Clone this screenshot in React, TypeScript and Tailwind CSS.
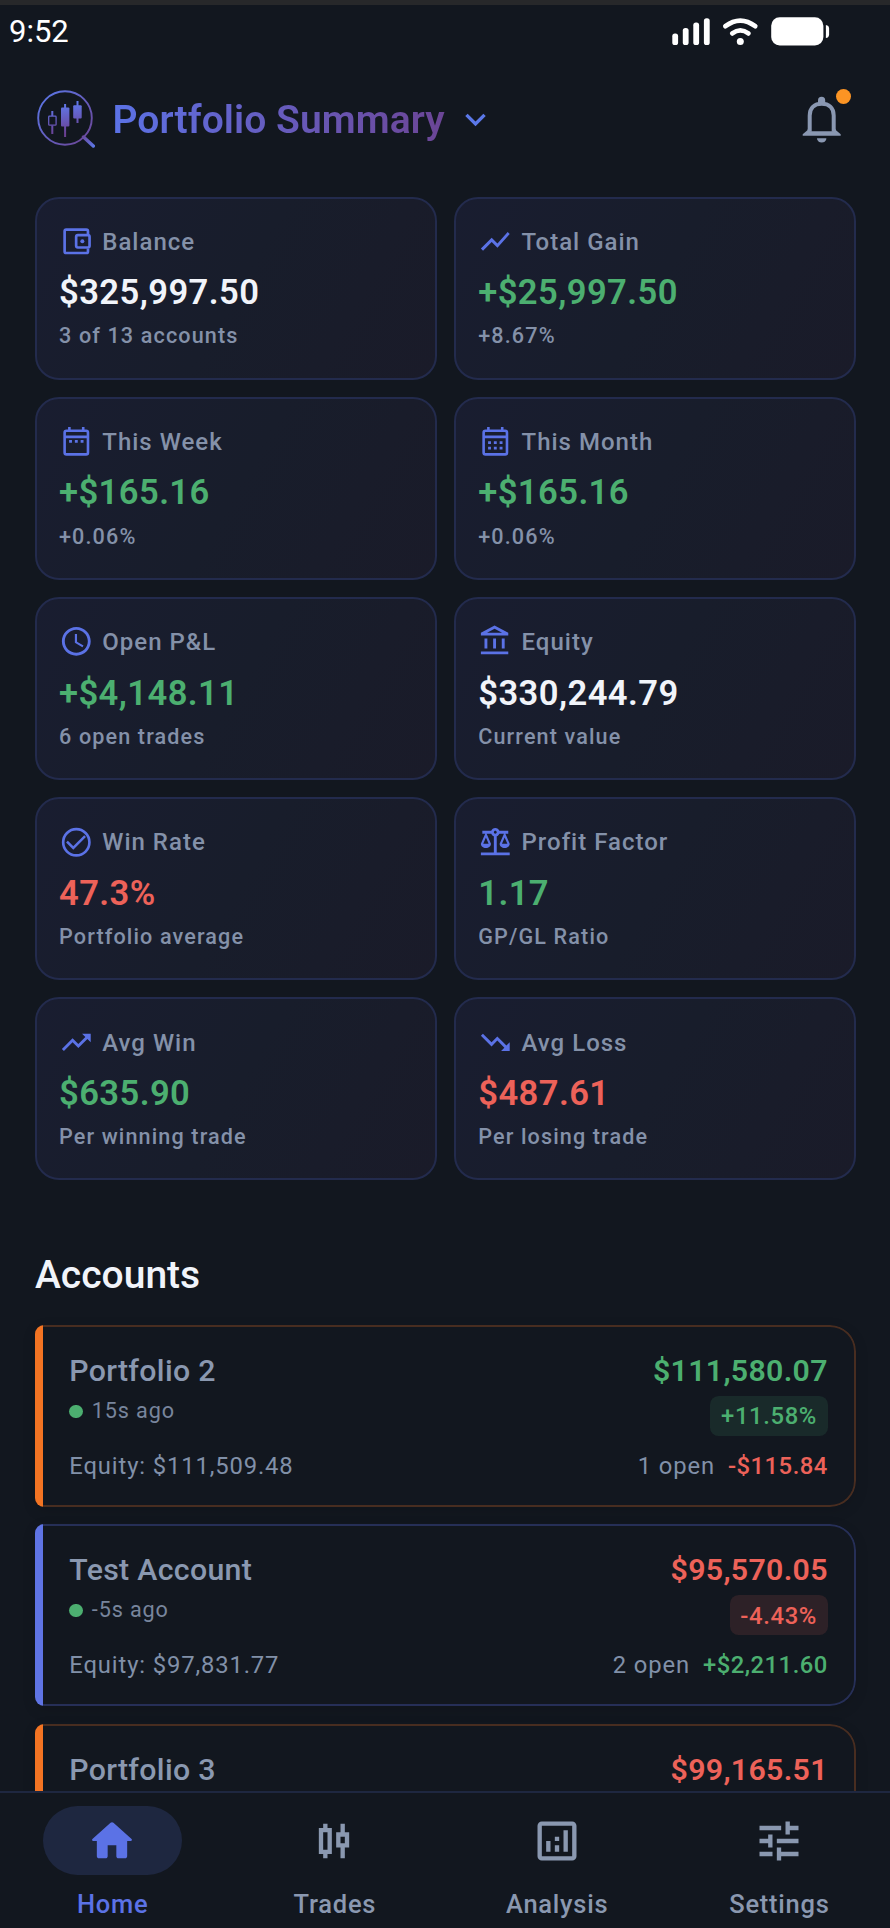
import type { ComponentType, ReactNode } from "react";
import {
  MdAccessTime,
  MdKeyboardArrowDown,
  MdOutlineAccountBalance,
  MdOutlineAnalytics,
  MdOutlineBalance,
  MdOutlineCandlestickChart,
  MdShowChart,
  MdTrendingDown,
  MdTrendingUp,
  MdTune,
} from "react-icons/md";

type Tone = "neutral" | "gain" | "loss";

interface IconProps {
  className?: string;
}

interface Stat {
  label: string;
  value: string;
  note: string;
  tone: Tone;
  icon: ComponentType<IconProps>;
}

interface Account {
  name: string;
  updated: string;
  equity: string;
  balance: string;
  change: string;
  open: string;
  openPnl: string;
  tone: Tone;
  openTone: Tone;
  accent: "orange" | "blue";
}

const toneText: Record<Tone, string> = {
  neutral: "text-[#f1f4fa]",
  gain: "text-[#4caf70]",
  loss: "text-[#ed6259]",
};

function WalletIcon({ className }: IconProps) {
  return (
    <svg className={className} viewBox="0 0 24 24" fill="none" stroke="currentColor" strokeWidth="1.85">
      <path d="M20.100 7V5c0-.7-.5-1.100-1.200-1.100H5c-.7 0-1.100.5-1.100 1.100v14c0 .7.5 1.100 1.100 1.100h14c.7 0 1.100-.5 1.100-1.100v-2" />
      <rect x="11.900" y="7.700" width="9.300" height="8.600" rx="1.200" />
      <circle cx="16.200" cy="12" r="1.400" fill="currentColor" stroke="none" />
    </svg>
  );
}

// rows are the y positions of the day dots
function CalendarIcon({ className, rows }: IconProps & { rows: number[] }) {
  return (
    <svg className={className} viewBox="0 0 24 24" fill="none" stroke="currentColor" strokeWidth="1.8">
      <rect x="3.900" y="4.700" width="16.200" height="16.400" rx="1.300" />
      <path d="M3.900 8.900h16.200M7.200 2v2.600M16.800 2v2.600" />
      {rows.map((y) => (
        <path key={y} d={`M7 ${y}h2M11 ${y}h2M15 ${y}h2`} strokeWidth="1.9" />
      ))}
    </svg>
  );
}

function WeekIcon({ className }: IconProps) {
  return <CalendarIcon className={className} rows={[12]} />;
}

function MonthIcon({ className }: IconProps) {
  return <CalendarIcon className={className} rows={[12.9, 16.8]} />;
}

function CheckIcon({ className }: IconProps) {
  return (
    <svg className={className} viewBox="0 0 24 24" fill="none" stroke="currentColor" strokeWidth="1.85">
      <circle cx="12" cy="12" r="9.100" />
      <path d="M6.100 12.100 9.900 15.900 17.500 8.300" strokeLinecap="square" strokeWidth="1.700" />
    </svg>
  );
}

const stats: Stat[] = [
  { label: "Balance", value: "$325,997.50", note: "3 of 13 accounts", tone: "neutral", icon: WalletIcon },
  { label: "Total Gain", value: "+$25,997.50", note: "+8.67%", tone: "gain", icon: MdShowChart },
  { label: "This Week", value: "+$165.16", note: "+0.06%", tone: "gain", icon: WeekIcon },
  { label: "This Month", value: "+$165.16", note: "+0.06%", tone: "gain", icon: MonthIcon },
  { label: "Open P&L", value: "+$4,148.11", note: "6 open trades", tone: "gain", icon: MdAccessTime },
  { label: "Equity", value: "$330,244.79", note: "Current value", tone: "neutral", icon: MdOutlineAccountBalance },
  { label: "Win Rate", value: "47.3%", note: "Portfolio average", tone: "loss", icon: CheckIcon },
  { label: "Profit Factor", value: "1.17", note: "GP/GL Ratio", tone: "gain", icon: MdOutlineBalance },
  { label: "Avg Win", value: "$635.90", note: "Per winning trade", tone: "gain", icon: MdTrendingUp },
  { label: "Avg Loss", value: "$487.61", note: "Per losing trade", tone: "loss", icon: MdTrendingDown },
];

const accounts: Account[] = [
  {
    name: "Portfolio 2",
    updated: "15s ago",
    equity: "$111,509.48",
    balance: "$111,580.07",
    change: "+11.58%",
    open: "1 open",
    openPnl: "-$115.84",
    tone: "gain",
    openTone: "loss",
    accent: "orange",
  },
  {
    name: "Test Account",
    updated: "-5s ago",
    equity: "$97,831.77",
    balance: "$95,570.05",
    change: "-4.43%",
    open: "2 open",
    openPnl: "+$2,211.60",
    tone: "loss",
    openTone: "gain",
    accent: "blue",
  },
];

function StatusBar() {
  return (
    <div className="flex h-[66px] shrink-0 items-start justify-between border-t-[5px] border-[#27282a] pl-[9px] pr-[60px] pt-[8px]">
      <span className="mt-px text-[31px] leading-[36px] text-white">9:52</span>
      <svg className="mt-[4px] h-[29px] w-[158px]" viewBox="672 17 158 29" fill="#fff">
        <rect x="672.3" y="33.6" width="5.8" height="11.4" rx="2.6" />
        <rect x="682.8" y="28" width="5.8" height="17" rx="2.6" />
        <rect x="693.3" y="22.6" width="5.8" height="22.4" rx="2.6" />
        <rect x="703.9" y="18.2" width="5.8" height="26.8" rx="2.6" />
        <g fill="none" stroke="#fff" strokeWidth="4.8" strokeLinecap="round">
          <path d="M725.4 26.2C735 18.8 745.600 18.8 755.2 26.2" />
          <path d="M732.3 33.4C737.400 29.6 743.300 29.6 748.400 33.4" />
        </g>
        <circle cx="740.3" cy="41.4" r="3.500" />
        <rect x="771.2" y="17.2" width="52.2" height="28.400" rx="8.500" />
        <path d="M825.9 25c2 .3 3.200 1.500 3.200 3.500v6c0 2-1.200 3.300-3.200 3.600z" />
      </svg>
    </div>
  );
}

function Logo() {
  return (
    <svg className="h-[60px] w-[60px]" viewBox="36 88 60 60">
      <defs>
        <linearGradient id="ring" gradientUnits="userSpaceOnUse" x1="45" y1="98" x2="85" y2="138">
          <stop offset="0" stopColor="#5c72e0" />
          <stop offset="1" stopColor="#6b4a9e" />
        </linearGradient>
        <linearGradient id="candle" gradientUnits="userSpaceOnUse" x1="62" y1="104" x2="66" y2="134">
          <stop offset="0" stopColor="#5f78ea" />
          <stop offset="1" stopColor="#6b3f92" />
        </linearGradient>
        <linearGradient id="handle" gradientUnits="userSpaceOnUse" x1="83" y1="136" x2="94" y2="147">
          <stop offset="0" stopColor="#6b4a9e" />
          <stop offset="1" stopColor="#5c78e8" />
        </linearGradient>
      </defs>
      <circle cx="65" cy="118" r="26.8" fill="none" stroke="url(#ring)" strokeWidth="1.9" />
      <path d="M83.500 137 93.300 146" stroke="url(#handle)" strokeWidth="3.400" strokeLinecap="round" />
      <g stroke="url(#candle)" fill="none">
        <path d="M52.300 111v5M52.300 125.500v8.500M65.100 104v33M77.500 101v22" strokeWidth="2" />
        <rect x="48.700" y="116.200" width="7.400" height="9" rx=".8" strokeWidth="1.300" />
      </g>
      <rect x="61" y="107.500" width="8.400" height="19" rx="1" fill="url(#candle)" />
      <rect x="73.200" y="105.200" width="8.500" height="13.300" rx="1" fill="url(#candle)" />
    </svg>
  );
}

function BellIcon() {
  return (
    <svg className="h-[56px] w-[52px]" viewBox="801 88 52 56">
      <path
        d="M809.700 131.800V115.500C809.700 107.500 814.600 103.700 821.700 103.700S833.700 107.500 833.700 115.500V131.800"
        fill="none"
        stroke="#8a98b2"
        strokeWidth="4"
      />
      <path d="M818 104v-3.600a3.600 3.600 0 0 1 7.200 0v3.600z" fill="#8a98b2" />
      <path d="M807.700 128.800v1.200l-5 4.300v1.500h38v-1.500l-5-4.300v-1.200l-2.500 2.400h-23z" fill="#8a98b2" />
      <path d="M817 138.200h9.400a4.700 4.400 0 0 1-9.400 0z" fill="#8a98b2" />
      <circle cx="843.500" cy="96.500" r="7.500" fill="#fb9424" />
    </svg>
  );
}

function StatCard({ stat }: { stat: Stat }) {
  const Icon = stat.icon;

  return (
    <div className="h-[183px] rounded-[24px] border-2 border-[#232b4d] bg-linear-[120deg] from-[#191d30] via-[#181d2b] to-[#1a1b29] pl-[22px] pt-[25.600px]">
      <div className="flex h-[34.600px] items-center gap-[8.700px]">
        <Icon className="size-[34.600px] text-[#5b72e6]" />
        <span className="mt-px text-[24px] font-medium tracking-[1px] text-[#8491a9]">{stat.label}</span>
      </div>
      <div className={`mt-[13.500px] text-[34.600px] font-semibold leading-[40px] tracking-[0.420px] ${toneText[stat.tone]}`}>
        {stat.value}
      </div>
      <div className="mt-[11.200px] text-[21.600px] font-medium leading-[26px] tracking-[1.120px] text-[#8491a9]">{stat.note}</div>
    </div>
  );
}

function AccountShell({ accent, children }: { accent: Account["accent"]; children: ReactNode }) {
  const orange = accent === "orange";

  return (
    <div className="flex h-[182px] shrink-0 overflow-hidden rounded-l-[9px] rounded-r-[26px] shadow-[0_4px_14px_rgba(0,0,0,0.12)]">
      <div className={`w-2 shrink-0 ${orange ? "bg-[#f37423]" : "bg-[#5f74e4]"}`} />
      <div
        className={`flex-1 rounded-r-[26px] border-y-2 border-r-2 bg-[#12171f] pl-[26.300px] pr-[26.200px] pt-[24px] ${
          orange ? "border-[#482d20]" : "border-[#262f57]"
        }`}
      >
        {children}
      </div>
    </div>
  );
}

function AccountCard({ account }: { account: Account }) {
  return (
    <AccountShell accent={account.accent}>
      <div className="flex justify-between">
        <div>
          <div className="text-[30.300px] font-medium leading-[40px] tracking-[0.300px] text-[#8a98b0]">{account.name}</div>
          <div className="mt-px flex h-[38px] items-center gap-[9px]">
            <span className="size-[13.500px] rounded-full bg-[#4caf70]" />
            <span className="text-[21.600px] tracking-[0.870px] text-[#78859c]">{account.updated}</span>
          </div>
        </div>
        <div className="flex flex-col items-end">
          <div className={`text-[30.300px] font-semibold leading-[40px] tracking-[0.300px] ${toneText[account.tone]}`}>
            {account.balance}
          </div>
          <div
            className={`mt-[5px] flex h-[40px] items-center rounded-[8.600px] px-[10.800px] pt-[2px] text-[23.800px] font-medium tracking-[0.650px] ${
              toneText[account.tone]
            } ${account.tone === "gain" ? "bg-[#192a2a]" : "bg-[#2d2127]"}`}
          >
            {account.change}
          </div>
        </div>
      </div>
      <div className="mt-[15px] flex items-center justify-between text-[23.800px] leading-[30px] tracking-[0.870px] text-[#8190a8]">
        <span>Equity: {account.equity}</span>
        <span className="flex gap-[13px]">
          <span>{account.open}</span>
          <span className={`font-medium tracking-[0.500px] ${toneText[account.openTone]}`}>{account.openPnl}</span>
        </span>
      </div>
    </AccountShell>
  );
}

function HomeIcon({ className }: IconProps) {
  return (
    <svg className={className} viewBox="0 0 24 24" fill="currentColor">
      <path d="M10 19v-5h4v5c0 .55.45 1 1 1h3c.55 0 1-.45 1-1v-7h1.700c.46 0 .68-.57.33-.87L12.670 3.600c-.38-.34-.96-.34-1.340 0l-8.360 7.530c-.34.3-.13.87.33.87H5v7c0 .55.45 1 1 1h3c.55 0 1-.45 1-1z" />
    </svg>
  );
}

function NavItem({ label, active, children }: { label: string; active?: boolean; children: ReactNode }) {
  return (
    <button type="button" className={`flex flex-col items-center ${active ? "text-[#5b72e6]" : "text-[#8a98b0]"}`}>
      <span className={`flex h-[69px] w-[139px] items-center justify-center rounded-full ${active ? "bg-[#1e2740]" : ""}`}>
        {children}
      </span>
      <span className="mt-[14px] pl-px text-[25.500px] font-medium leading-[30px] tracking-[0.750px]">{label}</span>
    </button>
  );
}

export default function App() {
  return (
    <div className="flex h-[1928px] w-[890px] flex-col overflow-hidden bg-[#12171f] font-[Roboto,sans-serif]">
      <StatusBar />

      <header className="flex h-[130.500px] shrink-0 items-start justify-between pl-9 pr-[37px] pt-[22px]">
        <div className="flex h-[60px] items-center">
          <Logo />
          <h1 className="ml-[16.500px] mt-[3px] bg-linear-to-r from-[#5b72e6] to-[#6b4596] bg-clip-text text-[39px] font-semibold leading-[50px] tracking-[0.070px] text-transparent">
            Portfolio Summary
          </h1>
          <MdKeyboardArrowDown className="ml-[10.500px] mt-[2px] size-[41px] text-[#5b78e8]" />
        </div>
        <BellIcon />
      </header>

      <main className="flex min-h-0 flex-1 flex-col overflow-hidden pl-[35px] pr-[34px]">
        <section className="grid shrink-0 grid-cols-2 gap-x-[17.500px] gap-y-[17.200px]">
          {stats.map((stat) => (
            <StatCard key={stat.label} stat={stat} />
          ))}
        </section>

        <h2 className="mt-[70px] text-[39px] font-medium leading-[50px] text-[#f1f4fa]">Accounts</h2>

        <section className="mt-[25px] flex shrink-0 flex-col gap-[17.200px]">
          {accounts.map((account) => (
            <AccountCard key={account.name} account={account} />
          ))}
          <AccountShell accent="orange">
            <div className="flex justify-between text-[30.300px] leading-[40px] tracking-[0.300px]">
              <span className="font-medium text-[#8a98b0]">Portfolio 3</span>
              <span className={`font-semibold ${toneText.loss}`}>$99,165.51</span>
            </div>
          </AccountShell>
        </section>
      </main>

      <nav className="grid h-[137px] shrink-0 grid-cols-4 items-start border-t-2 border-[#1e2740] pl-px pt-[13px]">
        <NavItem label="Home" active>
          <HomeIcon className="size-[52px]" />
        </NavItem>
        <NavItem label="Trades">
          <MdOutlineCandlestickChart className="size-[52px]" />
        </NavItem>
        <NavItem label="Analysis">
          <MdOutlineAnalytics className="size-[52px]" />
        </NavItem>
        <NavItem label="Settings">
          <MdTune className="size-[52px]" />
        </NavItem>
      </nav>
    </div>
  );
}
